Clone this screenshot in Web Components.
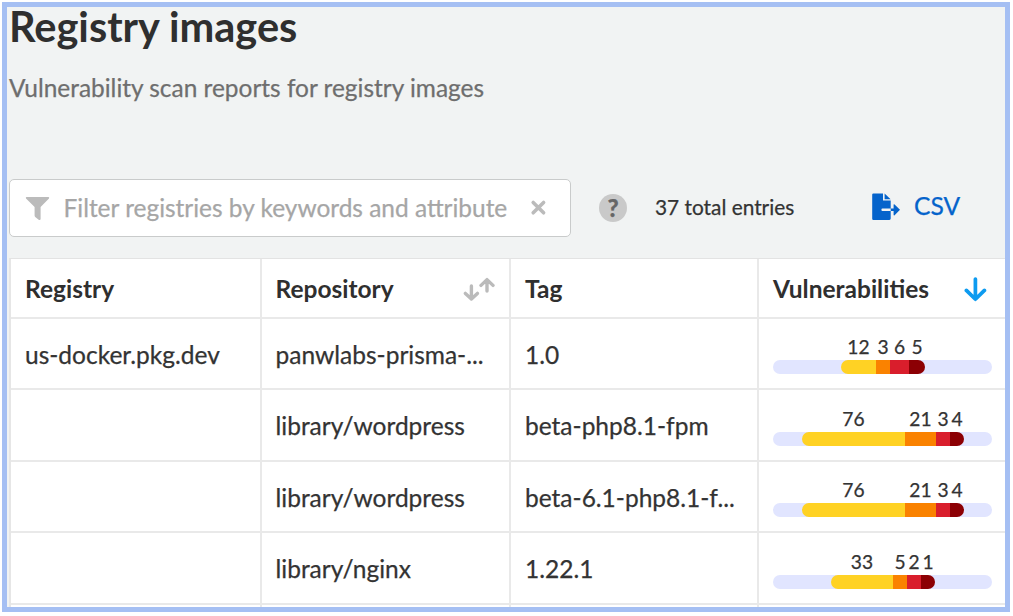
<!DOCTYPE html>
<html lang="en">
<head>
<meta charset="utf-8">
<title>Registry images</title>
<style>
html,body{margin:0;height:100%;background:#fff}
body{font-family:Lato,"Open Sans",sans-serif;color:#333;overflow:hidden;-webkit-text-stroke:.25px currentColor}
</style>
</head>
<body>
<registry-page></registry-page>
<script>
const define = (name, html, setup) => {
  const t = document.createElement('template');
  t.innerHTML = html;
  customElements.define(name, class extends HTMLElement {
    connectedCallback() {
      if (this.shadowRoot) return;
      this.attachShadow({mode:'open'}).append(t.content.cloneNode(true));
      if (setup) setup(this, this.shadowRoot);
    }
  });
};

define('page-heading', `
<style>
:host{display:flow-root;height:172px;padding-left:2px;white-space:nowrap}
h1{margin:-5px 0 0;font-size:41.5px;line-height:49px;font-weight:700;color:#2f2f2f;-webkit-text-stroke:0}
p{margin:0;padding-top:22px;font-size:24.45px;line-height:30px;color:#6e6e6e}
</style>
<h1><slot name="title"></slot></h1><p><slot></slot></p>`);

define('filter-box', `
<style>
:host{display:flex;align-items:center;box-sizing:border-box;width:562px;height:58px;border:1.5px solid #c9cbcb;border-radius:5px;background:#fff;padding:0 22px 0 15px}
svg{display:block;flex:none}
span{flex:1;margin-left:13.5px;font-size:24.45px;line-height:30px;color:#a6a6a6;white-space:nowrap}
</style>
<svg width="25" height="25" viewBox="0 0 25 25"><path fill="#bbb" d="M1.5 1H23.5Q24.6 1.4 24 2.6L15.6 11V23Q15.4 24.6 14 23.9L10.2 21Q9.6 20.4 9.6 19.5V11L1 2.6Q.4 1.4 1.5 1Z"/></svg>
<span><slot></slot></span>
<svg width="18" height="18" viewBox="0 0 18 18"><path d="M3.2 3.4 13.6 13.8M13.6 3.4 3.2 13.8" fill="none" stroke="#bbb" stroke-width="3.6" stroke-linecap="round"/></svg>`);

define('help-badge', `
<style>
:host{display:flex;align-items:center;justify-content:center;width:28px;height:28px;border-radius:50%;background:#c9c9c9;color:#666;font-size:24px;line-height:28px;font-weight:900}
</style><slot></slot>`);

define('csv-button', `
<style>
:host{display:flex;align-items:center;color:#0563cb;font-size:24.6px;line-height:30px;padding-bottom:4px}
svg{display:block;margin:2px 13px 0 0}
</style>
<svg width="29" height="28" viewBox="0 0 29 28"><path fill="#0563cb" d="M1.4.4H11V7.6H18.7V15.5H10.4Q9.4 15.5 9.4 16.8T10.4 18.1H18.7V25.6Q18.7 27 17.4 27H1.4Q.2 27 .2 25.8V1.6Q.2.4 1.4.4ZM12.6.4 18.6 6.2H12.6ZM18.7 15.5H21.6V11.6Q21.8 10.8 22.6 11.4L28 16.8 22.6 22.2Q21.8 22.8 21.6 22V18.1H18.7Z"/></svg><slot></slot>`);

define('sort-icon', `
<style>:host{display:block}svg{display:block}</style>
<svg width="32" height="26" viewBox="0 0 32 26"></svg>`, (el, root) => {
  const s = root.querySelector('svg');
  if (el.hasAttribute('active')) {
    s.setAttribute('width', 24); s.setAttribute('viewBox', '0 0 24 26');
    s.innerHTML = '<path d="M12.4 3V23M3.4 14.4 12.4 23.2 21.4 14.4" fill="none" stroke="#0d9bf0" stroke-width="3.7" stroke-linecap="round" stroke-linejoin="round"/>';
  } else {
    s.innerHTML = '<path d="M8.4 10V22.4M2.4 17.4 8.4 23 14.4 17.4M24 15V4M18 9.4 24 3.6 30 9.4" fill="none" stroke="#bbb" stroke-width="3.4" stroke-linecap="round" stroke-linejoin="round"/>';
  }
});

define('severity-bar', `
<style>
:host{display:block;width:219px;flex:none}
.counts,.fill{display:grid;margin-left:var(--start)}
.counts{font-size:19.2px;line-height:24px;text-align:center;height:24px}
.counts span{display:flex;justify-content:center}
.track{height:14px;border-radius:7px;background:#e1e5ff;margin-top:1px;overflow:hidden}
.fill{height:14px;border-radius:7px;overflow:hidden}
.fill i:nth-child(1){background:#ffd224}
.fill i:nth-child(2){background:#fa8200}
.fill i:nth-child(3){background:#d91e2c}
.fill i:nth-child(4){background:#8c0004}
</style>
<div class="counts"></div><div class="track"><div class="fill"><i></i><i></i><i></i><i></i></div></div>`, (el, root) => {
  const w = el.getAttribute('widths').split(' ');
  const cols = w.map(x => x + 'px').join(' ');
  const c = root.querySelector('.counts'), f = root.querySelector('.fill');
  c.style.gridTemplateColumns = f.style.gridTemplateColumns = cols;
  f.style.width = w.reduce((a, b) => a + +b, 0) + 'px';
  el.style.setProperty('--start', el.getAttribute('start') + 'px');
  for (const n of el.getAttribute('counts').split(' ')) {
    const s = document.createElement('span'); s.textContent = n; c.append(s);
  }
});

define('table-cell', `
<style>
:host{display:flex;align-items:center;justify-content:space-between;box-sizing:border-box;min-width:0;padding:2px 14px 0 14px;border-right:2px solid #e9e9e9;border-bottom:2px solid #e9e9e9;font-size:24.5px;line-height:30px;white-space:nowrap}
:host([head]){font-weight:700;color:#2f2f2f;-webkit-text-stroke:0}
:host([last]){border-right:0;padding-right:18px}
:host([bar]){align-items:flex-end;padding-right:0;padding-bottom:14px}
</style><slot></slot>`);

define('image-table', `
<style>
:host{display:grid;box-sizing:border-box;background:#fff;border-left:2px solid #e6e6e6;border-top:1px solid #e3e3e3;margin-left:2px;grid-template-columns:250.5px 249.5px 248px 1fr;grid-template-rows:60px 71px 72px 71px 72px 3px}
</style><slot></slot>`);

define('registry-page', `
<style>
:host{display:block;box-sizing:border-box;width:1008px;height:610px;margin:2px 0 0 2px;border:5px solid #a5bff3;background:#f1f3f3;overflow:hidden;position:relative}
.bar{display:flex;align-items:center;height:58px;margin-left:2px;padding-bottom:21px}
help-badge{margin-left:28px}
.total{margin-left:28px;font-size:20.85px;line-height:28px;width:217px;white-space:nowrap;padding-bottom:2px}
</style>
<page-heading><span slot="title">Registry images</span>Vulnerability scan reports for registry images</page-heading>
<div class="bar"><filter-box>Filter registries by keywords and attribute</filter-box><help-badge>?</help-badge><span class="total">37 total entries</span><csv-button>CSV</csv-button></div>
<image-table>
<table-cell head>Registry</table-cell><table-cell head><span>Repository</span><sort-icon></sort-icon></table-cell><table-cell head>Tag</table-cell><table-cell head last><span>Vulnerabilities</span><sort-icon active></sort-icon></table-cell>
<table-cell>us-docker.pkg.dev</table-cell><table-cell>panwlabs-prisma-...</table-cell><table-cell>1.0</table-cell><table-cell last bar><severity-bar start="68" widths="35 14 19 16" counts="12 3 6 5"></severity-bar></table-cell>
<table-cell></table-cell><table-cell>library/wordpress</table-cell><table-cell>beta-php8.1-fpm</table-cell><table-cell last bar><severity-bar start="29" widths="103 31 14 14" counts="76 21 3 4"></severity-bar></table-cell>
<table-cell></table-cell><table-cell>library/wordpress</table-cell><table-cell>beta-6.1-php8.1-f...</table-cell><table-cell last bar><severity-bar start="29" widths="103 31 14 14" counts="76 21 3 4"></severity-bar></table-cell>
<table-cell></table-cell><table-cell>library/nginx</table-cell><table-cell>1.22.1</table-cell><table-cell last bar><severity-bar start="58" widths="62 14 14 14" counts="33 5 2 1"></severity-bar></table-cell>
<table-cell></table-cell><table-cell></table-cell><table-cell></table-cell><table-cell last></table-cell>
</image-table>`);
</script>
</body>
</html>
